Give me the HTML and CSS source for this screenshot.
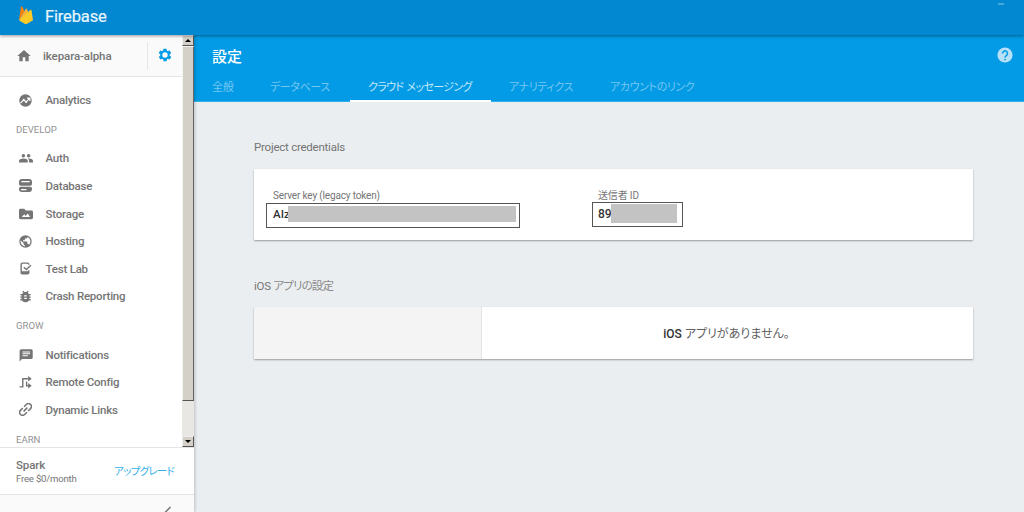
FILE: index.html
```html
<!DOCTYPE html>
<html lang="ja">
<head>
    <meta charset="UTF-8">
    <meta name="viewport" content="width=device-width, initial-scale=1.0">
    <title>Firebase</title>
    <link rel="stylesheet" href="styles.css">
</head>
<body>

<header class="topbar">
    <svg class="logo" viewBox="0 0 16 20">
        <path fill="#f6820c" d="M1 15.5 3.2 1.2C3.3.5 4 .4 4.4 1L7 5.8z"/>
        <path fill="#fbb03b" d="M1 15.5 8.3 3.5c.3-.5.8-.5 1.1 0l2 4z"/>
        <path fill="#ffca28" d="M1 15.500 13.400 4.500c.4-.4.9-.2 1 .3L16 15.500l-6.800 4a2 2 0 0 1-1.700 0z"/>
    </svg>
    <span class="brand">Firebase</span>
    <span class="topbar-mark"></span>
</header>

<div class="layout">
    <!-- Sidebar -->
    <aside class="sidebar">
        <div class="scroll-area">
            <div class="nav-column">
                <div class="project">
                    <svg class="icon home" viewBox="0 0 24 24"><path d="M10 20v-6h4v6h5v-8h3L12 3 2 12h3v8z"/></svg>
                    <span class="project-name">ikepara-alpha</span>
                    <span class="settings">
                        <svg class="icon gear" viewBox="1 1 22 22"><path fill-rule="evenodd" d="M19.400 13a7.500 7.500 0 0 0 0-2l2.100-1.600c.2-.2.2-.4.1-.6l-2-3.500c-.1-.2-.4-.3-.6-.2l-2.500 1a7.300 7.300 0 0 0-1.700-1l-.4-2.700c0-.2-.2-.4-.5-.4h-4c-.2 0-.4.2-.5.4l-.4 2.700a7.700 7.700 0 0 0-1.700 1l-2.500-1c-.2-.1-.5 0-.6.2l-2 3.500c-.1.2-.1.500.1.600L4.600 11a7.900 7.900 0 0 0 0 2l-2.100 1.600c-.2.2-.2.4-.1.600l2 3.500c.1.2.4.3.6.2l2.500-1c.5.4 1.100.7 1.700 1l.4 2.700c0 .2.2.4.500.4h4c.2 0 .4-.2.5-.4l.4-2.700a7.700 7.700 0 0 0 1.700-1l2.500 1c.2.1.5 0 .6-.2l2-3.500c.1-.2.1-.5-.1-.6zM12 16.200a4.200 4.200 0 1 1 0-8.400 4.200 4.200 0 0 1 0 8.400z"/></svg>
                    </span>
                </div>
                <nav class="nav">
                    <a class="nav-item">
                        <svg class="icon" viewBox="1 1 22 22"><circle cx="12" cy="12" r="10.500"/><path class="cut" d="M3.500 16.500 9 11l4 3.500 6-6M14.500 8H19.500v5"/><circle class="dot" cx="9" cy="10.500" r="1.600"/><circle class="dot" cx="13" cy="14.500" r="1.600"/></svg>
                        Analytics
                    </a>
                    <h4 class="nav-title">DEVELOP</h4>
                    <a class="nav-item">
                        <svg class="icon wide" viewBox="0 0 24 24"><path d="M16.500 11a3 3 0 1 0 0-6 3 3 0 0 0 0 6zM7.500 11a3 3 0 1 0 0-6 3 3 0 0 0 0 6zM7.500 13C5 13 0 14.200 0 16.700V19.500h15v-2.800C15 14.200 10 13 7.500 13zM16.500 13l-1.200.1c1.200.8 2 2 2 3.600v2.800H24v-2.800c0-2.500-5-3.700-7.500-3.700z"/></svg>
                        Auth
                    </a>
                    <a class="nav-item">
                        <svg class="icon" viewBox="1 1 22 22"><path fill-rule="evenodd" d="M6 1h12a5 5 0 0 1 5 5v3.500a3 3 0 0 1-3 3H4a3 3 0 0 1-3-3V6a5 5 0 0 1 5-5zM5 4.500v2.200h14V4.500zM4 14h16a3 3 0 0 1 3 3v1a5 5 0 0 1-5 5H6a5 5 0 0 1-5-5v-1a3 3 0 0 1 3-3zM4.500 18v2h9v-2z"/></svg>
                        Database
                    </a>
                    <a class="nav-item">
                        <svg class="icon wide" viewBox="0 0 24 24"><path fill-rule="evenodd" d="M2.500 3H9l2.500 3h10A2.500 2.500 0 0 1 24 8.500v10a2.500 2.500 0 0 1-2.500 2.500h-19A2.500 2.500 0 0 1 0 18.500v-13A2.500 2.500 0 0 1 2.500 3zM5 17h14l-4-6-3.500 4.500L9 12.500z"/></svg>
                        Storage
                    </a>
                    <a class="nav-item">
                        <svg class="icon" viewBox="1.500 1.500 21 21"><path d="M12 2a10 10 0 1 0 0 20 10 10 0 0 0 0-20zm-1 17.930C7.050 19.440 4 16.080 4 12c0-.620.080-1.210.210-1.790L9 15v1a2 2 0 0 0 2 2v1.930zm6.900-2.540A2 2 0 0 0 16 16h-1v-3a1 1 0 0 0-1-1H8v-2h2a1 1 0 0 0 1-1V7h2a2 2 0 0 0 2-2v-.410A8 8 0 0 1 17.900 17.390z"/></svg>
                        Hosting
                    </a>
                    <a class="nav-item">
                        <svg class="icon" viewBox="0 0 24 24"><path class="line" d="M18 5V4a2 2 0 0 0-2-2H6a2 2 0 0 0-2 2v16a2 2 0 0 0 2 2h10a2 2 0 0 0 2-2v-5"/><path d="M4 17h14v5H4z"/><path class="line" d="m9 9.500 4.500 4.500L22 6"/></svg>
                        Test Lab
                    </a>
                    <a class="nav-item">
                        <svg class="icon" viewBox="2 2 20 20"><path fill-rule="evenodd" d="M20 8h-2.810a6 6 0 0 0-1.820-1.960L17 4.410 15.590 3l-2.170 2.170a6 6 0 0 0-2.830 0L8.410 3 7 4.410l1.620 1.630A6 6 0 0 0 6.810 8H4v2h2.090L6 11v1H4v2h2v1l.090 1H4v2h2.810a6 6 0 0 0 10.380 0H20v-2h-2.090l.090-1v-1h2v-2h-2v-1l-.090-1H20V8zm-6 8h-4v-2h4v2zm0-4h-4v-2h4v2z"/></svg>
                        Crash Reporting
                    </a>
                    <h4 class="nav-title">GROW</h4>
                    <a class="nav-item">
                        <svg class="icon wide" viewBox="0 0 24 24"><path fill-rule="evenodd" d="M4 2h17a2.500 2.500 0 0 1 2.500 2.500v12A2.500 2.500 0 0 1 21 19H5l-4 4V5a3 3 0 0 1 3-3zm2 4v1.500h13V6zm0 3.200v1.500h13V9.200zm0 3.300V14h9v-1.500z"/></svg>
                        Notifications
                    </a>
                    <a class="nav-item">
                        <svg class="icon" viewBox="0 0 24 24"><path class="line" d="M1 20h6V5h11M14 10v8h4"/><path d="M17 0l6.500 5-6.500 5zM17 13l6.500 5-6.500 5z"/></svg>
                        Remote Config
                    </a>
                    <a class="nav-item">
                        <svg class="icon" viewBox="1 1 22 22"><g transform="rotate(-45 12 12)"><path class="line" d="M10.500 17H5A5 5 0 0 1 5 7h5.500M13.500 7H19a5 5 0 0 1 0 10h-5.500M7.500 12h9"/></g></svg>
                        Dynamic Links
                    </a>
                    <h4 class="nav-title">EARN</h4>
                </nav>
            </div>
            <div class="scrollbar">
                <span class="scroll-btn"><i class="arrow up"></i></span>
                <span class="thumb"></span>
                <span class="track"></span>
                <span class="scroll-btn"><i class="arrow down"></i></span>
            </div>
        </div>
        <div class="plan">
            <div>
                <div class="plan-name">Spark</div>
                <div class="plan-price">Free $0/month</div>
            </div>
            <a class="upgrade">アップグレード</a>
        </div>
        <div class="collapse">
            <svg class="chevron" viewBox="0 0 8 12"><path d="M6.500 1 1.500 6l5 5"/></svg>
        </div>
    </aside>

    <!-- Main -->
    <main class="main">
        <div class="page-header">
            <div class="title-row">
                <h1>設定</h1>
                <svg class="help" viewBox="0 0 16 16"><circle cx="8" cy="8" r="7.600"/><path d="M5.500 6.400a2.500 2.500 0 1 1 4 2C8.600 9 8 9.300 8 10.500"/><path d="M8 11.800v1.500"/></svg>
            </div>
            <div class="tabs">
                <a class="tab general">全般</a>
                <a class="tab database">データベース</a>
                <a class="tab messaging active">クラウド メッセージング</a>
                <a class="tab analytics">アナリティクス</a>
                <a class="tab account">アカウントのリンク</a>
            </div>
        </div>

        <div class="content">
            <h2>Project credentials</h2>
            <section class="card credentials">
                <div class="field server-key">
                    <label>Server key (legacy token)</label>
                    <div class="value">AIz<span class="mask"></span></div>
                </div>
                <div class="field sender-id">
                    <label>送信者 <b>ID</b></label>
                    <div class="value">89<span class="mask"></span></div>
                </div>
            </section>

            <h2 class="ios-title">iOS <span class="kana">アプリの設定</span></h2>
            <section class="card apps">
                <div class="app-list"></div>
                <div class="empty"><b>iOS</b> <span class="kana">アプリがありません。</span></div>
            </section>
        </div>
    </main>
</div>

</body>
</html>
```

FILE: styles.css
```css
* {
    box-sizing: border-box;
}
body {
    margin: 0;
    height: 512px;
    overflow: hidden;
    font-family: Roboto, "Noto Sans CJK JP", sans-serif;
    font-size: 11.5px;
    color: #757575;
    background-color: #eaeef1;
}
h1, h2, h4 {
    margin: 0;
    font-weight: 400;
}

/* Top bar */
.topbar {
    position: relative;
    z-index: 2;
    display: flex;
    align-items: center;
    height: 35px;
    padding: 0 20px 2px 18px;
    background-color: #0288d1;
    box-shadow: 0 1px 3px rgba(0, 0, 0, 0.4);
}
.logo {
    width: 15px;
    height: 20px;
    margin-top: -3px;
}
.brand {
    margin-left: 12px;
    font-size: 16.5px;
    letter-spacing: -0.15px;
    color: #e8f5fc;
    -webkit-text-stroke: 0.2px #e8f5fc;
}
.topbar-mark {
    align-self: flex-start;
    width: 6px;
    height: 2px;
    margin: 3px 0 0 auto;
    background-color: #48a8dc;
}
.layout {
    display: flex;
    height: 477px;
}

/* Sidebar */
.sidebar {
    position: relative;
    z-index: 1;
    display: flex;
    flex-direction: column;
    width: 194px;
    background-color: #fff;
    box-shadow: 1px 0 3px rgba(0, 0, 0, 0.2);
}
.scroll-area {
    display: flex;
    flex: none;
    height: 413px;
    overflow: hidden;
    border-bottom: 1px solid #e4e4e4;
}
.nav-column {
    width: 182px;
}
.project {
    display: flex;
    align-items: center;
    height: 42px;
    padding-left: 16px;
    background-color: #fafafa;
    border-bottom: 1px solid #e6e6e6;
}
.project-name {
    width: 104px;
    margin-left: 11px;
    font-size: 11.5px;
    font-weight: 500;
    letter-spacing: -0.1px;
}
.settings {
    display: flex;
    align-items: center;
    height: 28px;
    padding-left: 10px;
    border-left: 1px solid #e6e6e6;
}
.icon {
    flex: none;
    width: 13px;
    height: 13px;
    fill: #757575;
}
.icon.home {
    width: 16px;
    height: 16px;
}
.icon.gear {
    width: 14px;
    height: 14px;
    margin-top: -2px;
    fill: #039be5;
}
.icon.wide {
    width: 14px;
    height: 14px;
    margin: 0 -0.5px;
}
.icon .cut {
    fill: none;
    stroke: #fff;
    stroke-width: 2;
}
.icon .dot {
    fill: #fff;
}
.icon .line {
    fill: none;
    stroke: #757575;
    stroke-width: 2.6;
}
.nav {
    padding-top: 9.4px;
}
.nav-item {
    display: flex;
    align-items: center;
    gap: 13.5px;
    height: 27.6px;
    padding-left: 19px;
    font-weight: 500;
    letter-spacing: -0.22px;
}
.nav-title {
    height: 30.6px;
    padding-left: 16px;
    font-size: 9.6px;
    line-height: 31px;
    color: #929292;
}

/* Classic scrollbar */
.scrollbar {
    display: flex;
    flex-direction: column;
    width: 12px;
    background-color: #e9e7e3;
}
.scroll-btn {
    display: flex;
    align-items: center;
    justify-content: center;
    height: 11px;
    background-color: #d4d0c8;
    border: 1px solid;
    border-color: #eee #555 #555 #eee;
}
.thumb {
    height: 355px;
    background-color: #d4d0c8;
    border: 1px solid;
    border-color: #f4f4f4 #666 #555 #f4f4f4;
}
.track {
    flex: 1;
}
.arrow {
    width: 0;
    border: 3px solid transparent;
}
.arrow.up {
    border-top: 0;
    border-bottom-color: #000;
}
.arrow.down {
    border-bottom: 0;
    border-top-color: #000;
}

/* Plan */
.plan {
    display: flex;
    flex: none;
    align-items: center;
    justify-content: space-between;
    height: 47px;
    padding: 2px 20px 0 16px;
    border-bottom: 1px solid #e4e4e4;
}
.plan-name {
    line-height: 14px;
    font-weight: 500;
    letter-spacing: -0.1px;
}
.plan-price {
    font-size: 9.6px;
    line-height: 14px;
    letter-spacing: -0.2px;
}
.upgrade {
    margin-top: -4px;
    font-size: 10.5px;
    letter-spacing: -0.75px;
    color: #35aeeb;
    font-feature-settings: "palt";
    white-space: nowrap;
}
.collapse {
    flex: 1;
    min-height: 0;
    padding: 11px 0 0 164px;
    overflow: hidden;
    background-color: #fafafa;
}
.chevron {
    display: block;
    width: 8px;
    height: 12px;
    fill: none;
    stroke: #757575;
    stroke-width: 1.5;
}

/* Page header */
.main {
    flex: 1;
}
.page-header {
    height: 67px;
    background-color: #039be5;
    border-bottom: 1px solid #35aeea;
}
.title-row {
    display: flex;
    align-items: center;
    justify-content: space-between;
    height: 41px;
    padding: 0 11px 0 18px;
}
h1 {
    margin-top: -1px;
    font-size: 15px;
    font-weight: 500;
    color: #fff;
}
.help {
    width: 16px;
    height: 16px;
    margin-top: -2px;
    fill: #b5e0f8;
}
.help path {
    fill: none;
    stroke: #039be5;
    stroke-width: 1.5;
}
.tabs {
    display: flex;
    height: 26px;
}
.tab {
    padding-left: 18px;
    font-size: 11px;
    line-height: 23px;
    letter-spacing: -0.4px;
    color: #75c6f1;
    font-feature-settings: "palt";
    white-space: nowrap;
}
.tab.active {
    color: #c4e8fb;
    letter-spacing: -0.65px;
    word-spacing: 1px;
    border-bottom: 2px solid #fff;
}
.tab.general {
    width: 58px;
    letter-spacing: 0;
}
.database {
    width: 98px;
}
.messaging {
    width: 141px;
}
.analytics {
    width: 101px;
}

/* Content */
.content {
    padding: 36px 51px 0 60px;
}
h2 {
    height: 31px;
    font-size: 11.5px;
    line-height: 19px;
    letter-spacing: -0.24px;
}
.card {
    display: flex;
    width: 719px;
    background-color: #fff;
    border-radius: 1px;
    box-shadow: 0 1px 2px rgba(0, 0, 0, 0.35);
}
.credentials {
    height: 71px;
    padding: 19px 0 0 12px;
}
.field label {
    display: block;
    height: 15px;
    padding-left: 7px;
    font-size: 10px;
    line-height: 15px;
    letter-spacing: -0.16px;
}
.field b {
    font-weight: 400;
}
.value {
    display: flex;
    height: 25px;
    padding: 2px 3px 5px 6px;
    font-size: 11.5px;
    font-weight: 500;
    line-height: 17px;
    color: #333;
    border: 1px solid #555;
}
.mask {
    flex: 1;
    margin-left: -2px;
    background-color: #c3c3c3;
}
.server-key {
    width: 254px;
}
.sender-id {
    width: 91px;
    margin-left: 72px;
}
.sender-id label {
    padding-left: 6px;
    height: 14px;
}
.sender-id .value {
    padding: 1px 5px 3px 5px;
    font-size: 12px;
    line-height: 21px;
}
.sender-id .mask {
    margin-left: -1px;
}
.ios-title {
    margin-top: 36px;
    line-height: 21px;
}
.ios-title .kana {
    color: #8a8a8a;
    letter-spacing: -0.85px;
}
.kana {
    font-feature-settings: "palt";
}
.apps {
    height: 52px;
}
.app-list {
    width: 228px;
    background-color: #f4f4f4;
    border-right: 1px solid #e4e4e4;
}
.empty {
    flex: 1;
    padding-right: 2px;
    text-align: center;
    font-size: 12px;
    line-height: 54px;
    color: #606060;
}
.empty b {
    font-weight: 500;
    color: #333;
}
```
